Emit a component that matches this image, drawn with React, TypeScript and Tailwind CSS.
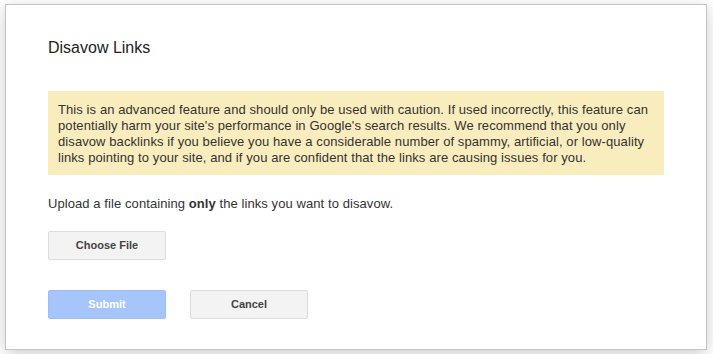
const warningLines = [
  'This is an advanced feature and should only be used with caution. If used incorrectly, this feature can',
  "potentially harm your site's performance in Google's search results. We recommend that you only",
  'disavow backlinks if you believe you have a considerable number of spammy, artificial, or low-quality',
  'links pointing to your site, and if you are confident that the links are causing issues for you.',
];

export default function App() {
  return (
    <div className="min-h-screen bg-white pl-[5px] pt-[4px] font-['Liberation_Sans',Arial,sans-serif] text-[#222]">
      <div className="w-[702px] h-[346px] border border-[#c4c4c4] bg-white shadow-[0_4px_16px_rgba(0,0,0,0.2)] px-[42px] pt-[31px]">
        <h1 className="text-[16px] leading-[24px] font-normal text-[#222]">Disavow Links</h1>

        <div className="mt-[31px] bg-[#f9edbe] px-[10px] pt-[11px] pb-[9px] text-[13px] leading-4 tracking-[0.09px] text-[#333] whitespace-nowrap">
          {warningLines.map((line) => (
            <div key={line}>{line}</div>
          ))}
        </div>

        <p className="mt-[21px] text-[13px] leading-4 tracking-[0.08px] text-[#333]">
          Upload a file containing <b>only</b> the links you want to disavow.
        </p>

        <button className="mt-[19px] flex h-[29px] w-[118px] items-center justify-center rounded-[2px] border border-[#dcdcdc] bg-[#f3f3f3] text-[11px] font-bold text-[#444]">
          Choose File
        </button>

        <div className="mt-[30px] flex gap-[24px]">
          <button className="flex h-[29px] w-[118px] items-center justify-center rounded-[2px] border border-[#9dbdf5] bg-[#a6c5fa] text-[11px] font-bold text-white">
            Submit
          </button>
          <button className="flex h-[29px] w-[118px] items-center justify-center rounded-[2px] border border-[#dcdcdc] bg-[#f3f3f3] text-[11px] font-bold text-[#444]">
            Cancel
          </button>
        </div>
      </div>
    </div>
  );
}
